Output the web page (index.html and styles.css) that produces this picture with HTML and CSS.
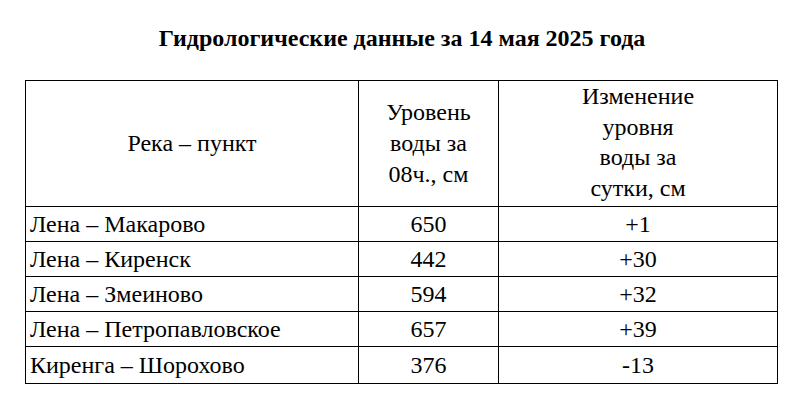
FILE: index.html
```html
<!DOCTYPE html>
<html>
<head>
<meta charset="utf-8">
<link rel="stylesheet" href="styles.css">
</head>
<body>
<h1 class="title">Гидрологические данные за 14 мая 2025 года</h1>
<table class="data">
  <colgroup>
    <col class="c1"><col class="c2"><col class="c3">
  </colgroup>
  <thead>
    <tr class="head">
      <th class="cell">Река – пункт</th>
      <th class="cell">Уровень<br>воды за<br>08ч., см</th>
      <th class="cell tall">Изменение<br>уровня<br>воды за<br>сутки, см</th>
    </tr>
  </thead>
  <tbody>
    <tr class="row"><td class="cell name">Лена – Макарово</td><td class="cell">650</td><td class="cell">+1</td></tr>
    <tr class="row"><td class="cell name">Лена – Киренск</td><td class="cell">442</td><td class="cell">+30</td></tr>
    <tr class="row"><td class="cell name">Лена – Змеиново</td><td class="cell">594</td><td class="cell">+32</td></tr>
    <tr class="row"><td class="cell name">Лена – Петропавловское</td><td class="cell">657</td><td class="cell">+39</td></tr>
    <tr class="row last"><td class="cell name">Киренга – Шорохово</td><td class="cell">376</td><td class="cell">-13</td></tr>
  </tbody>
</table>
</body>
</html>
```
FILE: styles.css
```css
body {
  margin: 0;
  background: #fff;
  color: #000;
  font-family: "Liberation Serif", serif;
}
.title {
  margin: 0;
  padding-top: 24px;
  height: 80px;
  box-sizing: border-box;
  font-family: "Liberation Serif", serif;
  font-size: 24px;
  line-height: 28px;
  font-weight: bold;
  text-align: center;
}
.data {
  margin-left: 25px;
  border-collapse: collapse;
  width: 752px;
  table-layout: fixed;
}
.c1 { width: 333px; }
.c2 { width: 140px; }
.c3 { width: 279px; }
.cell {
  border: 1px solid #000;
  padding: 0 4px;
  text-align: center;
  font-family: "Liberation Serif", serif;
  font-size: 24px;
  font-weight: normal;
  line-height: 30.7px;
  vertical-align: middle;
}
.head { height: 126px; }
.tall { vertical-align: top; padding-top: 0; }
.row { height: 35px; }
.last { height: 37px; }
.name { text-align: left; }
```
